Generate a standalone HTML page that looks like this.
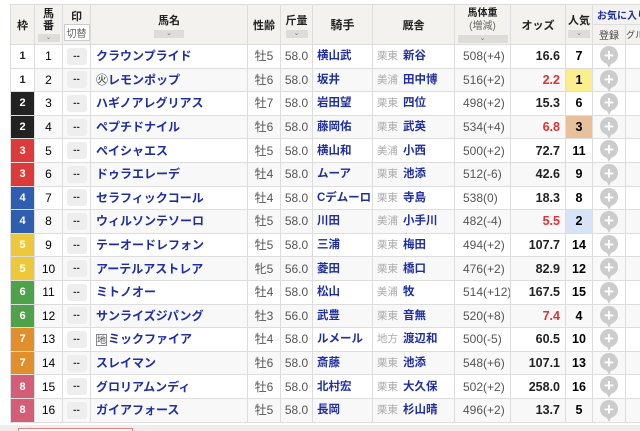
<!DOCTYPE html>
<html><head><meta charset="utf-8"><style>
*{margin:0;padding:0;box-sizing:border-box}
body{width:640px;height:431px;overflow:hidden;background:#fff;font-family:"Liberation Sans","Noto Sans CJK JP",sans-serif;position:relative}
table{position:absolute;left:10px;top:4px;border-collapse:collapse;table-layout:fixed;width:640px}
td,th{border:1px solid #ddd;font-size:12px;text-align:center;white-space:nowrap;overflow:hidden;padding:0}
td{line-height:14px}
th{background:#f3f2ef;font-weight:bold;color:#222;font-size:11px;position:relative}
tbody tr{height:23.6px}
tbody tr:nth-child(even){background:#f8f8f8}
.wk{color:#fff;font-weight:bold;font-size:11px}
.w1{background:#fff;color:#222}.w2{background:#222}.w3{background:#dd3b3b}.w4{background:#2f5db0}.w5{background:#ecc83a}.w6{background:#4da24a}.w7{background:#e08f2c}.w8{background:#d45e77}
.mk{display:inline-block;width:20px;height:17px;background:#eee;border-radius:3px;font-size:10px;font-weight:bold;line-height:17px;color:#333;vertical-align:middle}
.nm{text-align:left;padding-left:5px;color:#1f2fa0;font-weight:bold;font-size:12px}
.jk{text-align:left;padding-left:4px;color:#1f2fa0;font-weight:bold;font-size:11.5px}
.tr{text-align:left;padding-left:4px;font-size:11.5px;color:#1f2fa0;font-weight:bold}
.tr i{font-style:normal;color:#aaa;font-weight:normal;font-size:10.5px;margin-right:5px}
.g{color:#555}
.wt{color:#555;text-align:left;padding-left:8px;font-size:12px}
.od{text-align:right;padding-right:5px;font-weight:bold;font-size:12.5px;color:#222}
.red{color:#d33}
.pp{font-weight:bold;font-size:12.5px}
.p1{background:#fbee8c}.p2{background:#d7e3f7}.p3{background:#e8c19c}
.pc{position:relative}
.pin{position:absolute;left:7px;top:1px;width:18px;height:18px}
.pin:before{content:"";position:absolute;left:0;top:0;width:18px;height:18px;border-radius:50%;background:#ccc}
.pin:after{content:"";position:absolute;left:5px;top:14px;border-left:4px solid transparent;border-right:4px solid transparent;border-top:8px solid #ccc}
.pin b{position:absolute;left:0;top:1px;width:18px;text-align:center;color:#fff;font-size:17px;line-height:17px;z-index:1;font-weight:bold}
.sort{display:block;margin:2px auto 0;height:8px;background:#dedcd8;font-size:7px;line-height:8px;color:#777;font-weight:normal}
</style></head><body>
<table>
<colgroup><col style="width:24px"><col style="width:28px"><col style="width:28px"><col style="width:157px"><col style="width:33px"><col style="width:32px"><col style="width:60px"><col style="width:82px"><col style="width:56px"><col style="width:55px"><col style="width:27px"><col style="width:33px"><col style="width:25px"></colgroup>
<thead>
<tr style="height:20px"><th rowspan="2">枠</th><th rowspan="2" style="line-height:12px">馬<br>番<span class="sort" style="width:22px">⌄</span></th><th rowspan="2">印<br><span style="display:inline-block;border:1px solid #ccc;background:#fff;font-weight:normal;color:#666;padding:0 2px;font-size:10px">切替</span></th><th rowspan="2">馬名<span class="sort" style="width:30px">⌄</span></th><th rowspan="2">性齢</th><th rowspan="2">斤量<span class="sort" style="width:22px">⌄</span></th><th rowspan="2" style="font-size:12px">騎手</th><th rowspan="2">厩舎</th><th rowspan="2" style="font-size:10px;line-height:13px">馬体重<br><span style="font-weight:normal;color:#666">(増減)</span><span class="sort" style="width:50px">⌄</span></th><th rowspan="2">オッズ</th><th rowspan="2">人気<span class="sort" style="width:22px">⌄</span></th><th colspan="2" style="color:#1f2fa0;text-align:left;padding-left:4px;font-size:10px">お気に入り</th></tr>
<tr style="height:20px"><th style="font-weight:normal;font-size:10px;color:#444">登録</th><th style="font-weight:normal;font-size:9px;color:#444;text-align:left">グル</th></tr>
</thead>
<tbody>
<tr><td class="wk w1">1</td><td>1</td><td><span class="mk">--</span></td><td class="nm">クラウンプライド</td><td class="g">牡5</td><td class="g">58.0</td><td class="jk">横山武</td><td class="tr"><i>栗東</i>新谷</td><td class="wt">508(+4)</td><td class="od">16.6</td><td class="pp">7</td><td class="pc"><span class="pin"><b>+</b></span></td><td></td></tr>
<tr><td class="wk w1">1</td><td>2</td><td><span class="mk">--</span></td><td class="nm"><span style="font-weight:normal;color:#222">㊋</span>レモンポップ</td><td class="g">牡6</td><td class="g">58.0</td><td class="jk">坂井</td><td class="tr"><i>美浦</i>田中博</td><td class="wt">516(+2)</td><td class="od red">2.2</td><td class="pp p1">1</td><td class="pc"><span class="pin"><b>+</b></span></td><td></td></tr>
<tr><td class="wk w2">2</td><td>3</td><td><span class="mk">--</span></td><td class="nm">ハギノアレグリアス</td><td class="g">牡7</td><td class="g">58.0</td><td class="jk">岩田望</td><td class="tr"><i>栗東</i>四位</td><td class="wt">498(+2)</td><td class="od">15.3</td><td class="pp">6</td><td class="pc"><span class="pin"><b>+</b></span></td><td></td></tr>
<tr><td class="wk w2">2</td><td>4</td><td><span class="mk">--</span></td><td class="nm">ペプチドナイル</td><td class="g">牡6</td><td class="g">58.0</td><td class="jk">藤岡佑</td><td class="tr"><i>栗東</i>武英</td><td class="wt">534(+4)</td><td class="od red">6.8</td><td class="pp p3">3</td><td class="pc"><span class="pin"><b>+</b></span></td><td></td></tr>
<tr><td class="wk w3">3</td><td>5</td><td><span class="mk">--</span></td><td class="nm">ペイシャエス</td><td class="g">牡5</td><td class="g">58.0</td><td class="jk">横山和</td><td class="tr"><i>美浦</i>小西</td><td class="wt">500(+2)</td><td class="od">72.7</td><td class="pp">11</td><td class="pc"><span class="pin"><b>+</b></span></td><td></td></tr>
<tr><td class="wk w3">3</td><td>6</td><td><span class="mk">--</span></td><td class="nm">ドゥラエレーデ</td><td class="g">牡4</td><td class="g">58.0</td><td class="jk">ムーア</td><td class="tr"><i>栗東</i>池添</td><td class="wt">512(-6)</td><td class="od">42.6</td><td class="pp">9</td><td class="pc"><span class="pin"><b>+</b></span></td><td></td></tr>
<tr><td class="wk w4">4</td><td>7</td><td><span class="mk">--</span></td><td class="nm">セラフィックコール</td><td class="g">牡4</td><td class="g">58.0</td><td class="jk">Cデムーロ</td><td class="tr"><i>栗東</i>寺島</td><td class="wt">538(0)</td><td class="od">18.3</td><td class="pp">8</td><td class="pc"><span class="pin"><b>+</b></span></td><td></td></tr>
<tr><td class="wk w4">4</td><td>8</td><td><span class="mk">--</span></td><td class="nm">ウィルソンテソーロ</td><td class="g">牡5</td><td class="g">58.0</td><td class="jk">川田</td><td class="tr"><i>美浦</i>小手川</td><td class="wt">482(-4)</td><td class="od red">5.5</td><td class="pp p2">2</td><td class="pc"><span class="pin"><b>+</b></span></td><td></td></tr>
<tr><td class="wk w5">5</td><td>9</td><td><span class="mk">--</span></td><td class="nm">テーオードレフォン</td><td class="g">牡5</td><td class="g">58.0</td><td class="jk">三浦</td><td class="tr"><i>栗東</i>梅田</td><td class="wt">494(+2)</td><td class="od">107.7</td><td class="pp">14</td><td class="pc"><span class="pin"><b>+</b></span></td><td></td></tr>
<tr><td class="wk w5">5</td><td>10</td><td><span class="mk">--</span></td><td class="nm">アーテルアストレア</td><td class="g">牝5</td><td class="g">56.0</td><td class="jk">菱田</td><td class="tr"><i>栗東</i>橋口</td><td class="wt">476(+2)</td><td class="od">82.9</td><td class="pp">12</td><td class="pc"><span class="pin"><b>+</b></span></td><td></td></tr>
<tr><td class="wk w6">6</td><td>11</td><td><span class="mk">--</span></td><td class="nm">ミトノオー</td><td class="g">牡4</td><td class="g">58.0</td><td class="jk">松山</td><td class="tr"><i>美浦</i>牧</td><td class="wt">514(+12)</td><td class="od">167.5</td><td class="pp">15</td><td class="pc"><span class="pin"><b>+</b></span></td><td></td></tr>
<tr><td class="wk w6">6</td><td>12</td><td><span class="mk">--</span></td><td class="nm">サンライズジパング</td><td class="g">牡3</td><td class="g">56.0</td><td class="jk">武豊</td><td class="tr"><i>栗東</i>音無</td><td class="wt">520(+8)</td><td class="od red">7.4</td><td class="pp">4</td><td class="pc"><span class="pin"><b>+</b></span></td><td></td></tr>
<tr><td class="wk w7">7</td><td>13</td><td><span class="mk">--</span></td><td class="nm"><span style="font-weight:normal;color:#444;border:1px solid #888;font-size:9px;margin-right:1px">地</span>ミックファイア</td><td class="g">牡4</td><td class="g">58.0</td><td class="jk">ルメール</td><td class="tr"><i>地方</i>渡辺和</td><td class="wt">500(-5)</td><td class="od">60.5</td><td class="pp">10</td><td class="pc"><span class="pin"><b>+</b></span></td><td></td></tr>
<tr><td class="wk w7">7</td><td>14</td><td><span class="mk">--</span></td><td class="nm">スレイマン</td><td class="g">牡6</td><td class="g">58.0</td><td class="jk">斎藤</td><td class="tr"><i>栗東</i>池添</td><td class="wt">548(+6)</td><td class="od">107.1</td><td class="pp">13</td><td class="pc"><span class="pin"><b>+</b></span></td><td></td></tr>
<tr><td class="wk w8">8</td><td>15</td><td><span class="mk">--</span></td><td class="nm">グロリアムンディ</td><td class="g">牡6</td><td class="g">58.0</td><td class="jk">北村宏</td><td class="tr"><i>栗東</i>大久保</td><td class="wt">502(+2)</td><td class="od">258.0</td><td class="pp">16</td><td class="pc"><span class="pin"><b>+</b></span></td><td></td></tr>
<tr><td class="wk w8">8</td><td>16</td><td><span class="mk">--</span></td><td class="nm">ガイアフォース</td><td class="g">牡5</td><td class="g">58.0</td><td class="jk">長岡</td><td class="tr"><i>栗東</i>杉山晴</td><td class="wt">496(+2)</td><td class="od">13.7</td><td class="pp">5</td><td class="pc"><span class="pin"><b>+</b></span></td><td></td></tr>
</tbody></table>
<div style="position:absolute;left:0;top:425px;width:640px;height:6px;background:#eeedeb"></div>
<div style="position:absolute;left:18px;top:428px;width:115px;height:3px;border:1px solid #e08080;border-bottom:none;background:#fff"></div>
</body></html>
